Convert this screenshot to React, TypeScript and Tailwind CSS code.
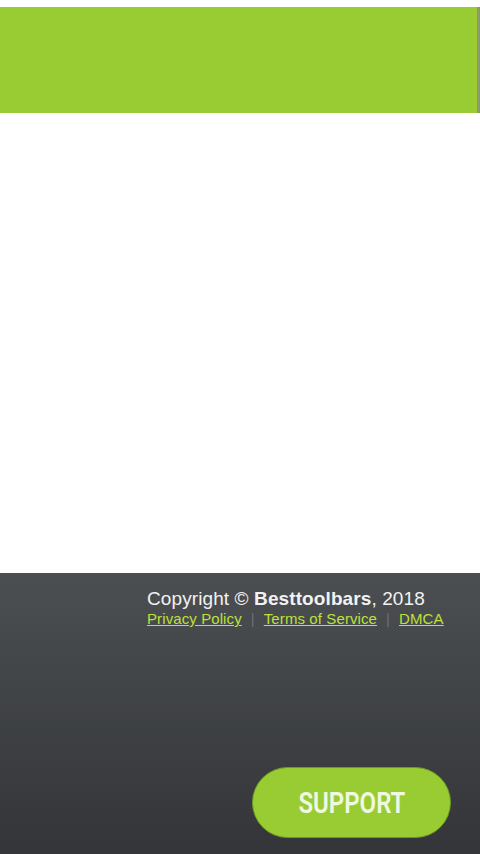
export default function App() {
  return (
    <div className="flex h-[854px] w-[480px] flex-col overflow-hidden bg-white font-['Liberation_Sans',Arial,sans-serif]">
      <div className="h-[7px] shrink-0 bg-white" />
      <header className="h-[106px] shrink-0 border-r-[3px] border-[#8a9a6a] bg-[#99cc33]" />
      <main className="flex-1 bg-white" />
      <footer className="flex h-[281px] shrink-0 flex-col bg-gradient-to-b from-[#4c4f52] to-[#333538] pb-[16px] pl-[147px] pr-[29px] pt-[15px]">
        <p className="text-[19px] leading-[22px] tracking-[0.1px] text-[#f2f2f2]">
          Copyright © <span className="font-bold">Besttoolbars</span>, 2018
        </p>
        <nav className="flex items-center text-[15px] leading-[18px] tracking-[0.1px]">
          <a href="#" className="text-[#bde03c] underline">
            Privacy Policy
          </a>
          <span className="mx-[9px] text-[#6b6e70]">|</span>
          <a href="#" className="text-[#bde03c] underline">
            Terms of Service
          </a>
          <span className="mx-[9px] text-[#6b6e70]">|</span>
          <a href="#" className="text-[#bde03c] underline">
            DMCA
          </a>
        </nav>
        <div className="mt-auto flex justify-end">
          <button className="flex h-[71px] w-[199px] items-center justify-center rounded-full border border-[#6f9a22] bg-[#99cc33] font-['Roboto',sans-serif] text-[30px] font-semibold text-[#f1f8e2]">
            <span className="inline-block scale-x-[0.8]">SUPPORT</span>
          </button>
        </div>
      </footer>
    </div>
  );
}
